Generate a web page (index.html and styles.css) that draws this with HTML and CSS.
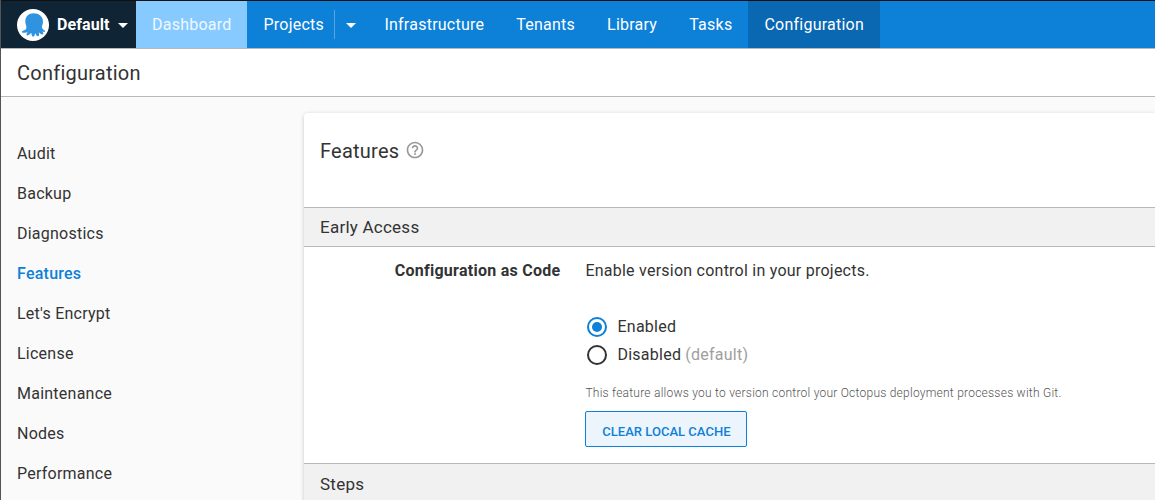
FILE: index.html
```html
<!DOCTYPE html>
<html lang="en">
<head>
<meta charset="utf-8">
<title>Features - Configuration</title>
<link rel="stylesheet" href="styles.css">
</head>
<body>
<div class="app">
  <nav class="topbar">
    <a class="space">
      <svg class="logo" viewBox="0 0 32 32"><circle cx="16" cy="16" r="16" fill="#fff"/><path fill="#2f93e0" d="M16.600 4.200C11.800 4.200 8.200 7.700 8.300 12.500c.1 3.300 1.500 4.700 1.100 6.500-.4 1.800-2.500 2.300-4.200 3.300-.7.500-.2 1.400.6 1.500 1.700.1 3.200-.3 4.600-.9-.5 1.200-1.200 2.300-.8 3.200.8 1.300 3.300-.6 4.700-2.300.5 1.200.1 3.300 1.500 3.800 1.700.4 2-1.900 2.300-3.600.8 1.400 1.500 3.500 2.900 3.200 1.500-.3 1-2.500.8-4 1.200 1.200 2.800 2.800 4.100 2.100 1-.6 0-2-.5-3 1 .5 2.300 1 2.700.3.600-1.200-2.800-2.200-3.100-4.200-.2-1.600 1.100-3 1-6.100-.1-4.700-4.200-8.100-9.400-8.100z"/></svg>
      <span class="space-name">Default</span>
      <span class="caret"></span>
    </a>
    <a class="nav-item dashboard">Dashboard</a>
    <a class="nav-item projects">Projects</a>
    <span class="split"><span class="caret"></span></span>
    <a class="nav-item">Infrastructure</a>
    <a class="nav-item">Tenants</a>
    <a class="nav-item">Library</a>
    <a class="nav-item">Tasks</a>
    <a class="nav-item current">Configuration</a>
  </nav>
  <header class="page-title">Configuration</header>
  <div class="content">
    <ul class="sidebar">
      <li>Audit</li>
      <li>Backup</li>
      <li>Diagnostics</li>
      <li class="active">Features</li>
      <li>Let's Encrypt</li>
      <li>License</li>
      <li>Maintenance</li>
      <li>Nodes</li>
      <li>Performance</li>
    </ul>
    <main class="paper">
      <div class="paper-head">
        <h1>Features</h1>
        <svg class="help" viewBox="0 0 24 24"><path fill="#999" d="M11 18h2v-2h-2v2zm1-16C6.480 2 2 6.480 2 12s4.480 10 10 10 10-4.480 10-10S17.520 2 12 2zm0 18c-4.410 0-8-3.590-8-8s3.590-8 8-8 8 3.590 8 8-3.590 8-8 8zm0-14c-2.210 0-4 1.790-4 4h2c0-1.100.9-2 2-2s2 .9 2 2c0 2-3 1.750-3 5h2c0-2.250 3-2.500 3-5 0-2.210-1.790-4-4-4z"/></svg>
      </div>
      <h2 class="section">Early Access</h2>
      <div class="feature">
        <div class="feature-name">Configuration as Code</div>
        <div class="feature-body">
          <p class="summary">Enable version control in your projects.</p>
          <div class="option"><span class="radio checked"></span><span>Enabled</span></div>
          <div class="option"><span class="radio"></span><span>Disabled <span class="muted">(default)</span></span></div>
          <p class="note">This feature allows you to version control your Octopus deployment processes with Git.</p>
          <button class="clear">CLEAR LOCAL CACHE</button>
        </div>
      </div>
      <h2 class="section steps">Steps</h2>
    </main>
  </div>
</div>
</body>
</html>
```
FILE: styles.css
```css
* { box-sizing: border-box; }
html, body { height: 100%; margin: 0; overflow: hidden; }
body { font: 16px/24px Roboto, sans-serif; letter-spacing: .24px; color: #333; background: #fafafa; }
.app { height: 500px; border-left: 1px solid #50555a; display: flex; flex-direction: column; overflow: hidden; }
.topbar { flex: none; height: 49px; display: flex; background: #0d80d8; color: #fff; border-top: 1px solid #111; border-bottom: 1px solid #b8b8b8; }
.space { width: 135px; padding-left: 16px; display: flex; align-items: center; background: #0f2535; }
.logo { width: 32px; height: 32px; margin-right: 8px; }
.space-name { width: 61px; font-weight: 700; letter-spacing: .1px; white-space: nowrap; }
.caret { border: 5px solid transparent; border-top-color: #fff; border-bottom: 0; margin-top: 2px; }
.nav-item { padding: 0 16px; line-height: 47px; white-space: nowrap; }
.dashboard { width: 111px; background: #87caff; color: #f0f8ff; }
.projects { width: 87px; padding-right: 0; padding-left: 16.500px; }
.split { width: 34.400px; height: 29px; margin-top: 9px; padding-right: 1.500px; display: flex; align-items: center; justify-content: center; border-left: 1px solid #56a6e4; }
.current { background: #0a67b1; }
.page-title { flex: none; height: 48px; padding-left: 16px; font-size: 20px; line-height: 48px; background: #fff; border-bottom: 1px solid #b8b8b8; }
.content { flex: 1; display: flex; }
.sidebar { width: 303px; margin: 0; padding: 37px 0 0 16px; list-style: none; }
.sidebar li { height: 40px; line-height: 40px; }
.sidebar .active { color: #0d80d8; font-weight: 500; }
.paper { flex: 1; margin-top: 16px; height: 420px; background: #fff; border-radius: 4px 0 0 0; box-shadow: 0 1px 4px rgba(0,0,0,.2); }
.paper-head { height: 94px; padding: 26px 0 0 16px; display: flex; gap: 5.500px; }
h1 { margin: 0; font-size: 20px; font-weight: 400; line-height: 24px; }
.help { width: 20px; height: 20px; margin-top: .5px; }
.section { height: 40px; margin: 0; padding-left: 16px; font-size: 17px; font-weight: 400; line-height: 39px; background: #f1f1f1; border: solid #b8b8b8; border-width: 1px 0; }
.steps { line-height: 41px; }
.feature { height: 216px; padding-top: 12px; display: flex; gap: 25px; }
.feature-name { width: 256.400px; text-align: right; font-weight: 700; letter-spacing: .26px; white-space: nowrap; }
.summary { margin: 0 0 30px; }
.option { height: 28px; display: flex; align-items: center; gap: 10px; padding-left: 1.600px; }
.radio { width: 20px; height: 20px; border: 2px solid #333; border-radius: 50%; display: flex; align-items: center; justify-content: center; }
.option > span:last-child { padding-left: .5px; }
.checked { border-color: #0d80d8; }
.checked::after { content: ""; width: 10px; height: 10px; border-radius: 50%; background: #0d80d8; }
.muted { color: #9e9e9e; }
.note { margin: 14px 0 8px; font-size: 12px; line-height: 20px; color: #555; font-weight: 300; white-space: nowrap; }
.clear { display: block; width: 162px; height: 36px; padding: 5px 0 0; font: 500 13px/20px Roboto, sans-serif; letter-spacing: .02px; color: #0d80d8; background: #ecf4fc; border: 1px solid #0d80d8; border-radius: 2px; }
```
